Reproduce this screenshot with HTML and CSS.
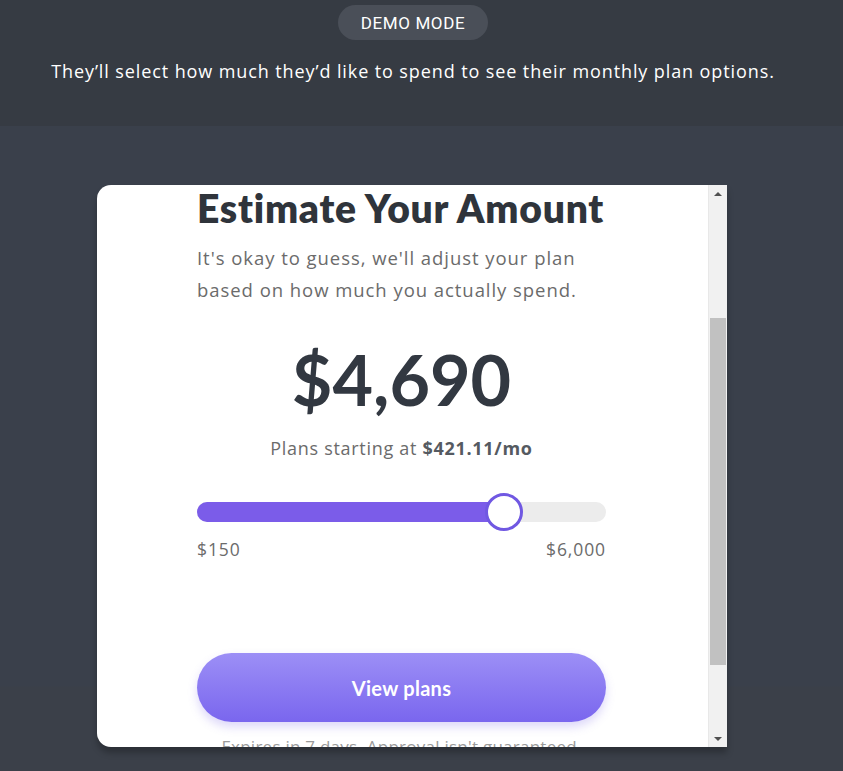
FILE: index.html
```html
<!DOCTYPE html>
<html>
<head>
<meta charset="utf-8">
<link rel="stylesheet" href="styles.css">
</head>
<body>
<div class="page">
  <header class="top">
    <div class="pill">DEMO MODE</div>
    <p class="caption">They’ll select how much they’d like to spend to see their monthly plan options.</p>
  </header>
  <main class="stage">
    <div class="card">
      <div class="content">
        <h1 class="title">Estimate Your Amount</h1>
        <p class="sub">It's okay to guess, we'll adjust your plan based on how much you actually spend.</p>
        <div class="amount">$4,690</div>
        <div class="starting">Plans starting at <b>$421.11/mo</b></div>
        <div class="slider">
          <div class="fill" style="width: 75%"></div>
          <div class="thumb"></div>
        </div>
        <div class="range"><span>$150</span><span>$6,000</span></div>
        <button class="cta">View plans</button>
        <div class="note">Expires in 7 days. Approval isn't guaranteed.</div>
      </div>
      <div class="scrollbar">
        <div class="arrow up"></div>
        <div class="track"><div class="sthumb"></div></div>
        <div class="arrow down"></div>
      </div>
    </div>
  </main>
</div>
</body>
</html>
```
FILE: styles.css
```css
* { box-sizing: border-box; }
html, body { margin: 0; padding: 0; }
body {
  background: #3a404b;
  width: 843px;
  height: 771px;
  overflow: hidden;
  font-family: "Open Sans", Lato, sans-serif;
}
.page {
  display: flex;
  flex-direction: column;
  height: 771px;
}
.top {
  background: #363b43;
  height: 126px;
  width: 843px;
  padding-right: 17px;
  display: flex;
  flex-direction: column;
  align-items: center;
  padding-top: 5px;
}
.pill {
  width: 150px;
  height: 35px;
  border-radius: 18px;
  background: #4a4f58;
  color: #ffffff;
  font-family: Roboto, sans-serif;
  font-size: 17px;
  letter-spacing: 0.6px;
  display: flex;
  align-items: center;
  justify-content: center;
}
.caption {
  margin: 17px 0 0;
  color: #ffffff;
  font-family: "Open Sans", sans-serif;
  font-size: 18px;
  font-weight: 500;
  letter-spacing: 0.9px;
  line-height: 28px;
  white-space: nowrap;
}
.stage {
  flex: 1;
  display: flex;
  justify-content: flex-start;
  padding-top: 59px;
  padding-left: 97px;
  background: linear-gradient(#3a404b 0, #3a404b 560px, #3b4049 561px);
}
.card {
  width: 630px;
  height: 562px;
  background: #ffffff;
  border-radius: 14px 0 0 14px;
  display: flex;
  overflow: hidden;
  box-shadow: 0 6px 6px rgba(0,0,0,0.25);
}
.content {
  flex: 1;
  padding: 0 102px 0 100px;
  display: flex;
  flex-direction: column;
}
.title {
  margin: 0;
  font-family: Lato, sans-serif;
  font-size: 39px;
  line-height: 46px;
  font-weight: 800;
  color: #2f343b;
  letter-spacing: 0.75px;
  white-space: nowrap;
}
.sub {
  margin: 11px 0 0;
  font-size: 18.5px;
  line-height: 32px;
  color: #6b6b6b;
  letter-spacing: 0.95px;
}
.amount {
  margin-top: 38px;
  text-align: center;
  font-family: Lato, sans-serif;
  font-size: 70px;
  line-height: 70px;
  font-weight: 700;
  color: #323841;
}
.starting {
  margin-top: 22px;
  text-align: center;
  font-size: 18px;
  line-height: 24px;
  color: #6b6b6b;
  letter-spacing: 0.7px;
}
.starting b { color: #555a61; font-weight: 700; }
.slider {
  margin-top: 42px;
  height: 20px;
  border-radius: 10px;
  background: #ececec;
  display: flex;
  align-items: center;
}
.fill {
  height: 20px;
  border-radius: 10px 0 0 10px;
  background: #7b5ce9;
}
.thumb {
  width: 38px;
  height: 38px;
  margin-left: -19px;
  border-radius: 50%;
  background: #ffffff;
  border: 3px solid #7058e2;
  flex: none;
}
.range {
  margin-top: 15px;
  display: flex;
  justify-content: space-between;
  font-size: 17.5px;
  line-height: 24px;
  color: #6b6b6b;
  letter-spacing: 0.9px;
}
.cta {
  margin-top: 92px;
  height: 69px;
  flex: none;
  border: none;
  border-radius: 35px;
  background: linear-gradient(#9c8ff6, #7a66ee);
  color: #ffffff;
  font-family: Lato, sans-serif;
  font-size: 20px;
  font-weight: 700;
  letter-spacing: 0.3px;
  box-shadow: 0 5px 10px rgba(120,100,230,0.25);
}
.note {
  margin-top: 14px;
  text-align: center;
  font-size: 17px;
  line-height: 22px;
  color: #9a9a9a;
  letter-spacing: 0.25px;
  white-space: nowrap;
}
.scrollbar {
  width: 19px;
  flex: none;
  background: #f1f1f1;
  border-left: 1px solid #e8e8e8;
  display: flex;
  flex-direction: column;
}
.arrow {
  height: 17px;
  display: flex;
  align-items: center;
  justify-content: center;
  flex: none;
}
.arrow::before {
  content: "";
  border-left: 4px solid transparent;
  border-right: 4px solid transparent;
}
.arrow.up::before { border-bottom: 4px solid #505050; }
.arrow.down::before { border-top: 4px solid #505050; }
.track {
  flex: 1;
  padding-top: 116px;
  display: flex;
  flex-direction: column;
}
.sthumb {
  height: 347px;
  margin: 0 1px;
  background: #c1c1c1;
}
```
